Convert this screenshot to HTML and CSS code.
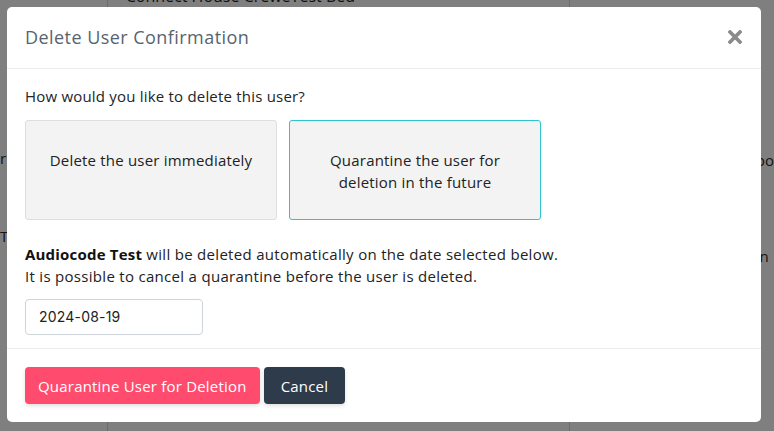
FILE: index.html
```html
<!DOCTYPE html>
<html lang="en">
<head>
<meta charset="utf-8">
<title>Delete User Confirmation</title>
<link rel="stylesheet" href="styles.css">
</head>
<body>
<div class="page">
  <div class="col col-left">
    <p class="bg-text left-1">r</p>
    <p class="bg-text left-2">Te</p>
  </div>
  <div class="col col-mid">
    <div class="select-mock">
      <span>Connect House CreweTest Bed</span>
      <svg class="chev" width="10" height="8" viewBox="0 0 10 8"><path d="M1 2 L5 6 L9 2" fill="none" stroke="#222" stroke-width="2.2"/></svg>
    </div>
  </div>
  <div class="col col-right">
    <p class="bg-text right-1">bo</p>
    <p class="bg-text right-2">in</p>
  </div>
</div>
<div class="backdrop"></div>
<div class="modal" role="dialog" aria-labelledby="modal-title">
  <div class="modal-header">
    <h5 id="modal-title" class="modal-title">Delete User Confirmation</h5>
    <button class="close" type="button" aria-label="Close">
      <svg width="14" height="14" viewBox="0 0 14 14"><path d="M2 2 L12 12 M12 2 L2 12" stroke="#8a8a8a" stroke-width="3.6" stroke-linecap="square"/></svg>
    </button>
  </div>
  <div class="modal-body">
    <p class="question">How would you like to delete this user?</p>
    <div class="options">
      <div class="option">Delete the user immediately</div>
      <div class="option selected">Quarantine the user for<br>deletion in the future</div>
    </div>
    <p class="info"><strong>Audiocode Test</strong> will be deleted automatically on the date selected below.<br>It is possible to cancel a quarantine before the user is deleted.</p>
    <div class="date-input">2024-08-19</div>
  </div>
  <div class="modal-footer">
    <button class="btn btn-danger" type="button">Quarantine User for Deletion</button>
    <button class="btn btn-dark" type="button">Cancel</button>
  </div>
</div>
</body>
</html>
```
FILE: styles.css
```css
html, body {
  margin: 0;
  padding: 0;
  height: 100%;
  overflow: hidden;
}
body {
  font-family: "Open Sans", "Liberation Sans", sans-serif;
  background: #ffffff;
  color: #212529;
}
.page {
  display: flex;
  height: 100%;
}
.col {
  box-sizing: border-box;
}
.col-left {
  width: 108px;
  padding-top: 147px;
}
.col-mid {
  width: 467px;
  border-left: 1px solid #d6d6d6;
  padding: 0 7px 0 18px;
}
.col-right {
  flex: 1;
  border-left: 1px solid #d6d6d6;
  padding-left: 186px;
  padding-top: 149px;
}
.bg-text {
  margin: 0;
  font-size: 15px;
  line-height: 22px;
  color: #2a2a2a;
  white-space: nowrap;
}
.left-2 { margin-top: 56px; }
.right-2 { margin-top: 74px; }
.select-mock {
  display: flex;
  align-items: center;
  justify-content: space-between;
  margin-top: -14px;
  height: 20px;
  font-size: 16px;
  color: #222;
}
.chev { margin-right: 1px; }
.backdrop {
  position: fixed;
  inset: 0;
  background: rgba(0, 0, 0, 0.5);
}
.modal {
  position: fixed;
  left: 7px;
  top: 7px;
  width: 754px;
  background: #fff;
  border-radius: 5px;
  box-sizing: border-box;
}
.modal-header {
  display: flex;
  align-items: center;
  justify-content: space-between;
  padding: 16px 18px 17px;
  border-bottom: 1px solid #e9ecef;
}
.modal-title {
  margin: 0;
  font-size: 18px;
  letter-spacing: 0.45px;
  line-height: 28px;
  font-weight: 400;
  color: #56646f;
}
.close {
  border: 0;
  background: none;
  padding: 0;
  margin-right: 1px;
  display: flex;
}
.modal-body {
  padding: 16px 18px 13px;
  font-size: 15px;
  letter-spacing: 0.2px;
  line-height: 22px;
}
.question {
  margin: 0 0 13px;
}
.options {
  display: flex;
  gap: 12px;
  margin-bottom: 23px;
}
.option {
  box-sizing: border-box;
  width: 252px;
  height: 100px;
  padding-top: 28px;
  text-align: center;
  background: #f3f3f3;
  border: 1px solid #dedede;
  border-radius: 3px;
  color: #222;
}
.option.selected {
  border-color: #2ec3cf;
}
.info {
  margin: 0 0 12px;
  color: #222;
  letter-spacing: 0.3px;
}
.info strong { font-weight: 700; color: #111; letter-spacing: 0.2px; }
.date-input {
  box-sizing: border-box;
  width: 178px;
  height: 36px;
  padding: 0 13px;
  display: flex;
  align-items: center;
  border: 1px solid #ced4da;
  border-radius: 4px;
  font-family: "Inter", "Roboto", sans-serif;
  font-size: 14px;
  letter-spacing: 0.2px;
  color: #222;
}
.modal-footer {
  display: flex;
  gap: 4px;
  padding: 18px;
  border-top: 1px solid #e9ecef;
}
.btn {
  font-family: inherit;
  font-size: 15px;
  letter-spacing: 0.2px;
  height: 37px;
  padding: 0 13px;
  border: 0;
  border-radius: 4px;
  color: #fff;
  box-shadow: 0 2px 4px rgba(0, 0, 0, 0.12);
}
.btn-danger { background: #ff4b6e; }
.btn-dark { background: #2e3b4a; padding: 0 17px; }
```
